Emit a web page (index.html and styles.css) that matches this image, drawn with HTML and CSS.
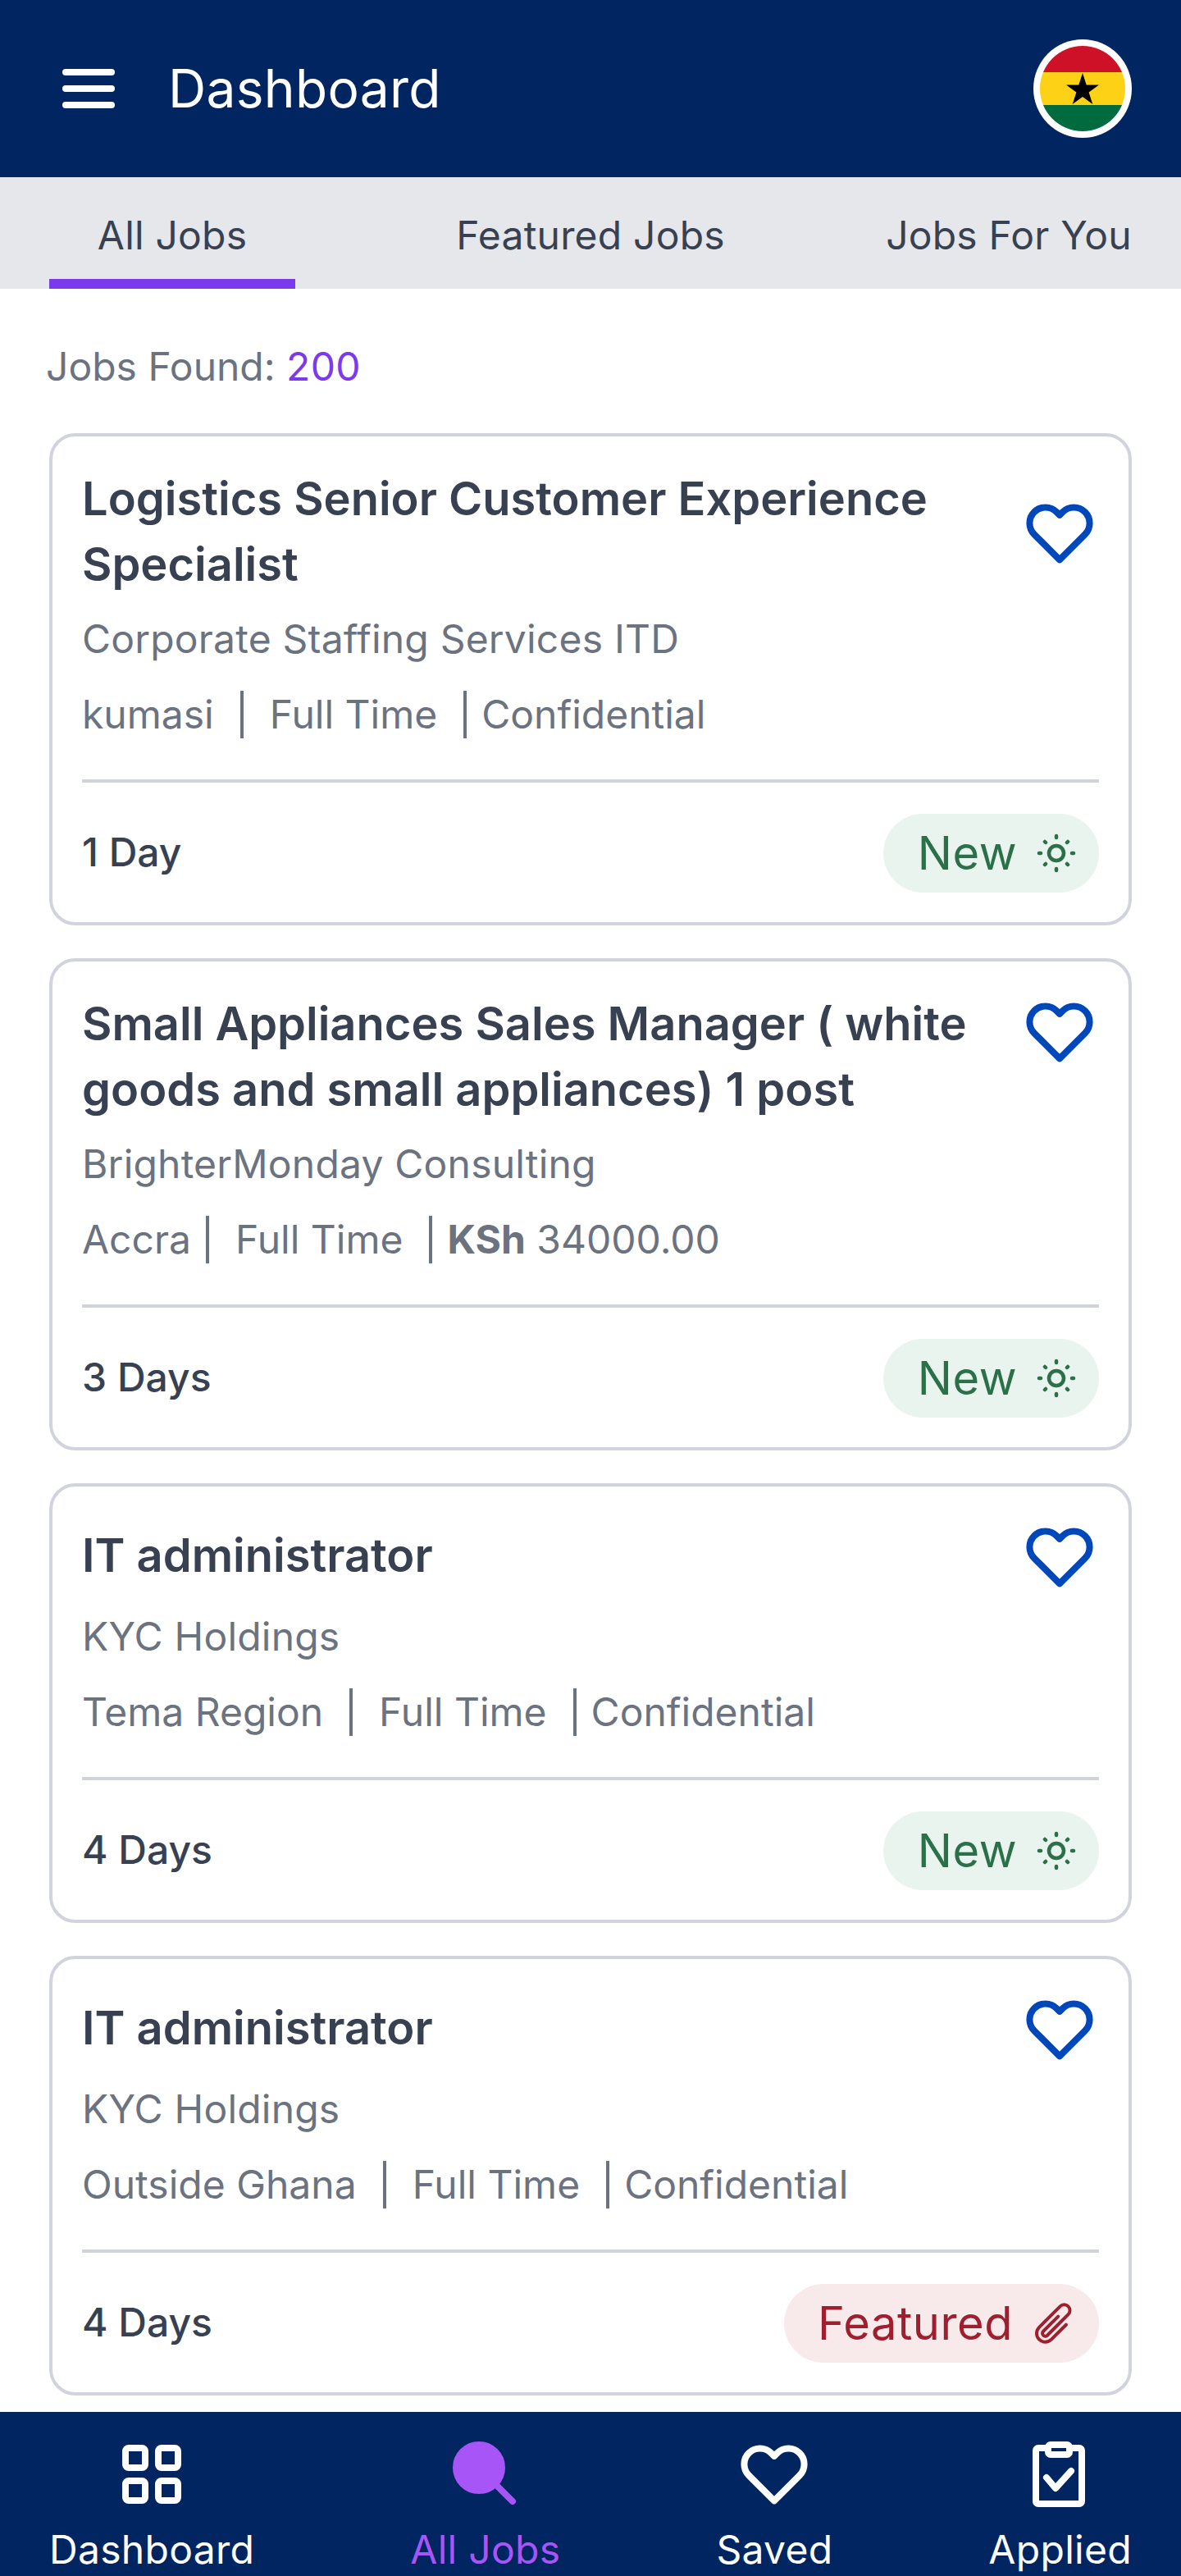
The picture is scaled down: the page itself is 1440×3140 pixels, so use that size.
FILE: index.html
```html
<!DOCTYPE html>
<html lang="en">
  <head>
    <meta charset="UTF-8" />
    <meta name="viewport" content="width=device-width, initial-scale=1.0" />
    <title>Dashboard</title>
    <link rel="stylesheet" href="styles.css">
  </head>
  <body>
    <header class="topbar">
      <div class="menu-icon"><span></span><span></span><span></span></div>
      <h1 class="topbar-title">Dashboard</h1>
      <svg class="flag" viewBox="0 0 120 120">
        <circle cx="60" cy="60" r="60" fill="#fff" />
        <clipPath id="flagClip"><circle cx="60" cy="60" r="52" /></clipPath>
        <g clip-path="url(#flagClip)">
          <rect x="0" y="8" width="120" height="32" fill="#ce1126" />
          <rect x="0" y="40" width="120" height="40" fill="#fcd116" />
          <rect x="0" y="80" width="120" height="32" fill="#006b3f" />
          <polygon points="60,41 64.7,55.4 80,55.4 67.6,64.4 72.3,79 60,70 47.7,79 52.4,64.4 40,55.4 55.3,55.4" fill="#000" />
        </g>
      </svg>
    </header>

    <nav class="tabs">
      <div class="tab tab-active">All Jobs</div>
      <div class="tab">Featured Jobs</div>
      <div class="tab">Jobs For You</div>
    </nav>

    <main class="content">
      <p class="jobs-found">Jobs Found: <span>200</span></p>

      <article class="job-card">
        <div class="job-head">
          <h2 class="job-title">Logistics Senior Customer Experience Specialist</h2>
          <svg class="heart" viewBox="0 0 24 24"><path d="M20.84 4.61a5.5 5.5 0 0 0-7.78 0L12 5.67l-1.06-1.06a5.5 5.5 0 0 0-7.78 7.78l1.06 1.06L12 21.23l7.78-7.78 1.06-1.06a5.5 5.5 0 0 0 0-7.78z" /></svg>
        </div>
        <p class="company">Corporate Staffing Services ITD</p>
        <div class="meta">
          <span class="meta-item">kumasi</span>
          <span class="meta-item">Full Time</span>
          <span>Confidential</span>
        </div>
        <div class="job-foot">
          <span class="posted">1 Day</span>
          <span class="badge badge-new">New
            <svg viewBox="0 0 48 48"><circle cx="24" cy="24" r="9" /><path d="M24 3v2M24 43v2M3 24h2M43 24h2M10 10l1 1M37 37l1 1M38 10l-1 1M11 37l-1 1" /></svg>
          </span>
        </div>
      </article>

      <article class="job-card">
        <div class="job-head job-head-top">
          <h2 class="job-title">Small Appliances Sales Manager ( white goods and small appliances) 1 post</h2>
          <svg class="heart" viewBox="0 0 24 24"><path d="M20.84 4.61a5.5 5.5 0 0 0-7.78 0L12 5.67l-1.06-1.06a5.5 5.5 0 0 0-7.78 7.78l1.06 1.06L12 21.23l7.78-7.78 1.06-1.06a5.5 5.5 0 0 0 0-7.78z" /></svg>
        </div>
        <p class="company">BrighterMonday Consulting</p>
        <div class="meta">
          <span class="meta-item meta-item-tight">Accra</span>
          <span class="meta-item">Full Time</span>
          <span><b>KSh</b> 34000.00</span>
        </div>
        <div class="job-foot">
          <span class="posted">3 Days</span>
          <span class="badge badge-new">New
            <svg viewBox="0 0 48 48"><circle cx="24" cy="24" r="9" /><path d="M24 3v2M24 43v2M3 24h2M43 24h2M10 10l1 1M37 37l1 1M38 10l-1 1M11 37l-1 1" /></svg>
          </span>
        </div>
      </article>

      <article class="job-card">
        <div class="job-head">
          <h2 class="job-title">IT administrator</h2>
          <svg class="heart" viewBox="0 0 24 24"><path d="M20.84 4.61a5.5 5.5 0 0 0-7.78 0L12 5.67l-1.06-1.06a5.5 5.5 0 0 0-7.78 7.78l1.06 1.06L12 21.23l7.78-7.78 1.06-1.06a5.5 5.5 0 0 0 0-7.78z" /></svg>
        </div>
        <p class="company">KYC Holdings</p>
        <div class="meta">
          <span class="meta-item">Tema Region</span>
          <span class="meta-item">Full Time</span>
          <span>Confidential</span>
        </div>
        <div class="job-foot">
          <span class="posted">4 Days</span>
          <span class="badge badge-new">New
            <svg viewBox="0 0 48 48"><circle cx="24" cy="24" r="9" /><path d="M24 3v2M24 43v2M3 24h2M43 24h2M10 10l1 1M37 37l1 1M38 10l-1 1M11 37l-1 1" /></svg>
          </span>
        </div>
      </article>

      <article class="job-card">
        <div class="job-head">
          <h2 class="job-title">IT administrator</h2>
          <svg class="heart" viewBox="0 0 24 24"><path d="M20.84 4.61a5.5 5.5 0 0 0-7.78 0L12 5.67l-1.06-1.06a5.5 5.5 0 0 0-7.78 7.78l1.06 1.06L12 21.23l7.78-7.78 1.06-1.06a5.5 5.5 0 0 0 0-7.78z" /></svg>
        </div>
        <p class="company">KYC Holdings</p>
        <div class="meta">
          <span class="meta-item">Outside Ghana</span>
          <span class="meta-item">Full Time</span>
          <span>Confidential</span>
        </div>
        <div class="job-foot">
          <span class="posted">4 Days</span>
          <span class="badge badge-featured">Featured
            <svg viewBox="0 0 24 24"><path d="M18.375 12.739l-7.693 7.693a4.5 4.5 0 01-6.364-6.364l10.94-10.94A3 3 0 1119.5 7.372L8.552 18.32m.009-.01l-.01.01m5.699-9.941l-7.81 7.81a1.5 1.5 0 002.112 2.13" /></svg>
          </span>
        </div>
      </article>
    </main>

    <footer class="bottom-nav">
      <div class="nav-item">
        <svg viewBox="0 0 80 80" fill="none" stroke="#fff" stroke-width="8">
          <rect x="8" y="8" width="24" height="24" rx="4" />
          <rect x="48" y="8" width="24" height="24" rx="4" />
          <rect x="8" y="48" width="24" height="24" rx="4" />
          <rect x="48" y="48" width="24" height="24" rx="4" />
        </svg>
        <span>Dashboard</span>
      </div>
      <div class="nav-item nav-item-active">
        <svg viewBox="0 0 80 80" fill="#a855f7" stroke="#a855f7" stroke-width="8" stroke-linecap="round">
          <circle cx="32" cy="32" r="28" />
          <path d="M54 54l19 19" />
        </svg>
        <span>All Jobs</span>
      </div>
      <div class="nav-item">
        <svg viewBox="0.57 0.57 22.86 22.86" fill="none" stroke="#fff" stroke-width="2.3" stroke-linecap="round" stroke-linejoin="round">
          <path d="M20.84 4.61a5.5 5.5 0 0 0-7.78 0L12 5.67l-1.06-1.06a5.5 5.5 0 0 0-7.78 7.78l1.06 1.06L12 21.23l7.78-7.78 1.06-1.06a5.5 5.5 0 0 0 0-7.78z" />
        </svg>
        <span>Saved</span>
      </div>
      <div class="nav-item">
        <svg viewBox="2 0 80 80" fill="none" stroke="#fff" stroke-width="8" stroke-linecap="round" stroke-linejoin="round">
          <rect x="12" y="8" width="56" height="68" rx="3" />
          <rect x="27" y="4" width="26" height="12" rx="3" fill="#002560" />
          <path d="M25 44l11 13 19-21" />
        </svg>
        <span>Applied</span>
      </div>
    </footer>
  </body>
</html>
```

FILE: styles.css
```css
body {
  margin: 0;
  background-color: #fff;
  font-family: "Inter", "Liberation Sans", sans-serif;
  color: #374151;
}

.topbar {
  display: flex;
  align-items: center;
  height: 216px;
  padding: 0 60px 0 76px;
  background-color: #002560;
  color: #fff;
}

.menu-icon {
  display: flex;
  flex-direction: column;
  gap: 12px;
  width: 64px;
}

.menu-icon span {
  height: 8px;
  border-radius: 4px;
  background-color: #fff;
}

.topbar-title {
  flex: 1;
  margin: 0 0 0 65px;
  font-size: 64px;
  font-weight: 400;
  letter-spacing: 0.3px;
  line-height: 80px;
}

.flag {
  width: 120px;
  height: 120px;
}

.tabs {
  display: flex;
  gap: 210px;
  height: 136px;
  padding-left: 60px;
  background-color: #e5e7eb;
}

.tab {
  display: flex;
  justify-content: center;
  box-sizing: border-box;
  width: 300px;
  padding-top: 35px;
  font-size: 48px;
  letter-spacing: 0.2px;
  line-height: 72px;
  white-space: nowrap;
}

.tab-active {
  border-bottom: 12px solid #7c3aed;
}

.content {
  display: flex;
  flex-direction: column;
  gap: 40px;
  padding: 0 60px 20px;
}

.jobs-found {
  margin: 59px 0 5px -4px;
  font-size: 48px;
  line-height: 72px;
  color: #6b7280;
}

.jobs-found span {
  color: #7c3aed;
  letter-spacing: 0.3px;
}

.job-card {
  padding: 36px;
  border: 4px solid #d1d5db;
  border-radius: 32px;
}

.job-head {
  display: flex;
  align-items: center;
  justify-content: space-between;
  min-height: 96px;
}

.job-head-top {
  align-items: flex-start;
}

.job-title {
  flex: 1;
  margin: 0;
  font-size: 56px;
  font-weight: 600;
  line-height: 80px;
}

.heart {
  flex: none;
  box-sizing: border-box;
  width: 96px;
  height: 96px;
  padding: 8px 6px 4px;
  fill: none;
  stroke: #0047bb;
  stroke-width: 2.3;
  stroke-linecap: round;
  stroke-linejoin: round;
}

.company {
  margin: 15px 0 0;
  font-size: 48px;
  letter-spacing: 0.2px;
  line-height: 72px;
  color: #6b7280;
}

.meta {
  display: flex;
  align-items: center;
  margin-top: 20px;
  font-size: 48px;
  line-height: 72px;
  color: #6b7280;
}

.meta-item {
  margin-right: 18px;
  padding-right: 32px;
  border-right: 4px solid #6b7280;
  line-height: 58px;
}

.meta-item:first-child {
  margin-right: 32px;
}

.meta-item-tight {
  padding-right: 18px;
}

.job-foot {
  display: flex;
  align-items: center;
  justify-content: space-between;
  margin-top: 43px;
  padding-top: 38px;
  border-top: 4px solid #d1d5db;
}

.posted {
  padding-bottom: 4px;
  font-size: 48px;
  font-weight: 500;
}

.badge {
  display: flex;
  align-items: center;
  height: 96px;
  padding-left: 42px;
  border-radius: 48px;
  font-size: 56px;
  letter-spacing: 0.5px;
  line-height: 96px;
}

.badge svg {
  fill: none;
  stroke-linecap: round;
  stroke-linejoin: round;
}

.badge-new {
  background-color: #e9f4ee;
  color: #2b7049;
}

.badge-new svg {
  width: 48px;
  height: 48px;
  margin: 0 28px 0 24px;
  stroke: #2b7049;
  stroke-width: 4.5;
}

.badge-featured {
  padding-left: 41px;
  background-color: #f8e9ea;
  color: #9f1f2f;
}

.badge-featured svg {
  width: 56px;
  height: 56px;
  margin: 0 27px 0 22px;
  stroke: #9f1f2f;
  stroke-width: 1.7;
}

.bottom-nav {
  display: flex;
  justify-content: space-between;
  height: 200px;
  padding: 0 60px;
  background-color: #002560;
  color: #fff;
}

.nav-item {
  display: flex;
  flex-direction: column;
  align-items: center;
  padding-top: 36px;
  font-size: 48px;
  letter-spacing: 0.3px;
  line-height: 64px;
}

.nav-item svg {
  width: 80px;
  height: 80px;
  margin-bottom: 20px;
  overflow: visible;
}

.nav-item-active {
  color: #a855f7;
}
```
